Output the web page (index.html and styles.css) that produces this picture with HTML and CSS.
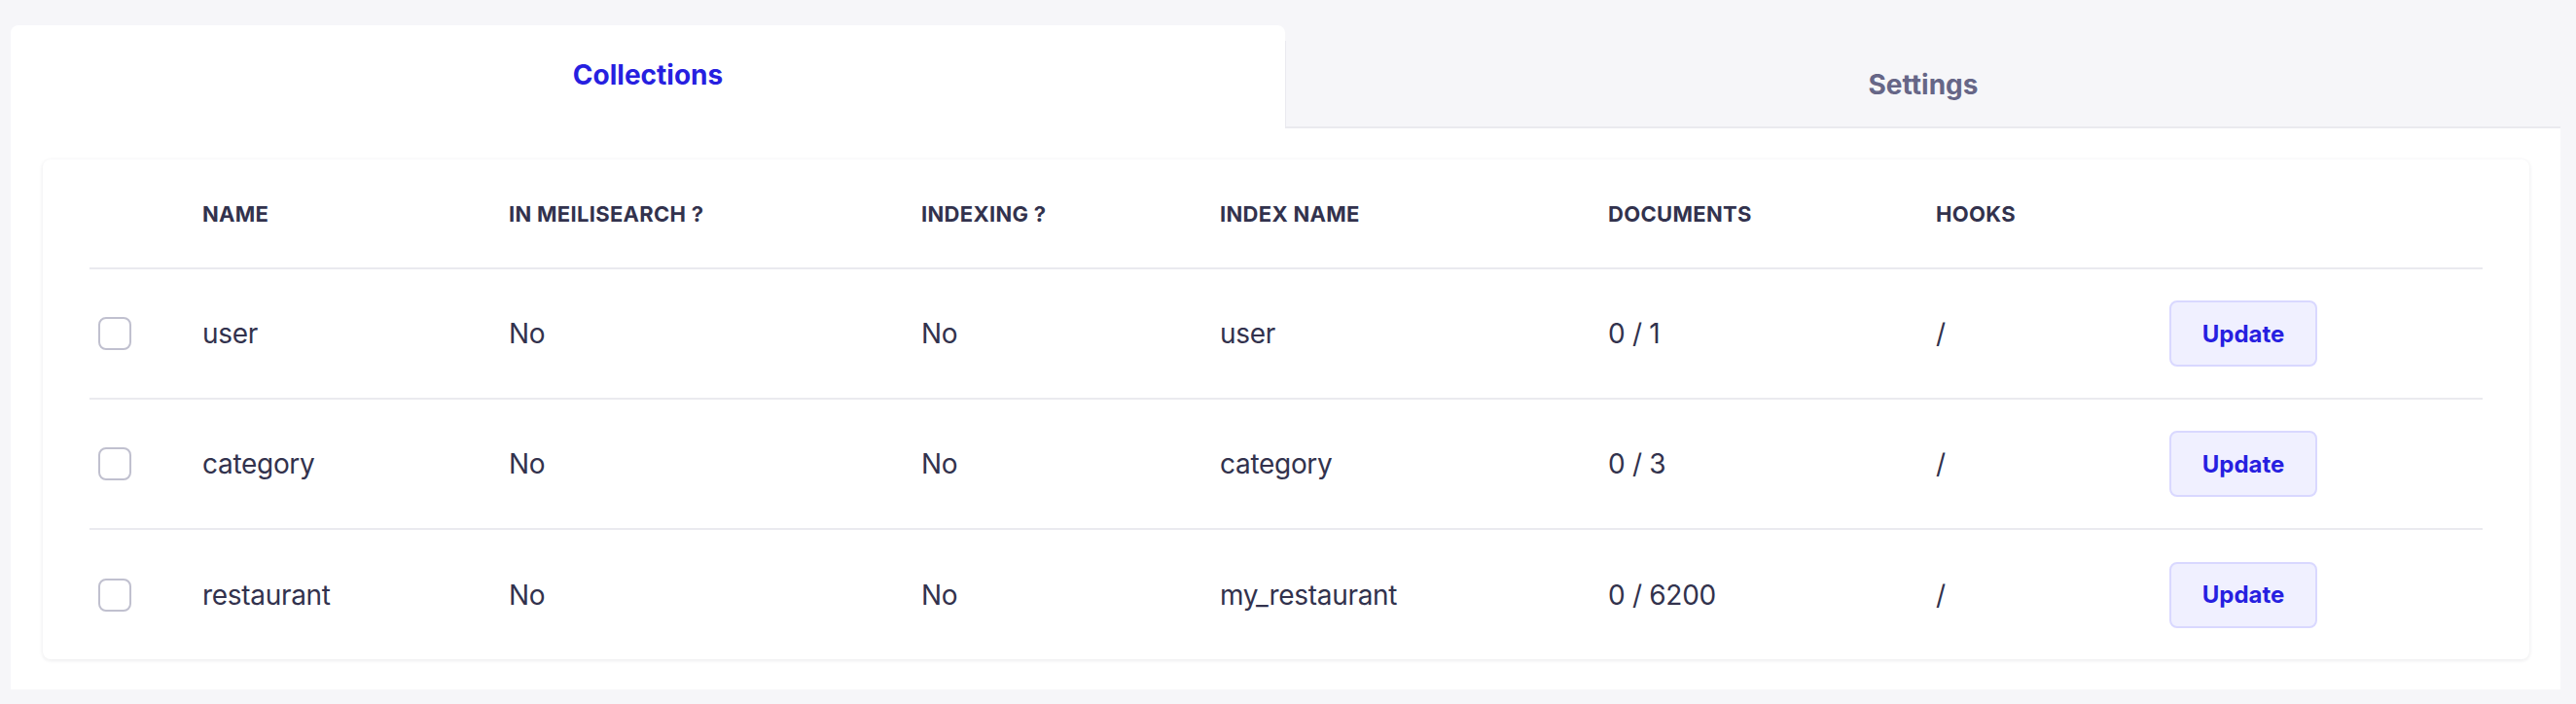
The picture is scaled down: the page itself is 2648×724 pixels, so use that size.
FILE: index.html
```html
<!DOCTYPE html>
<html lang="en">
<head>
<meta charset="utf-8">
<title>Meilisearch</title>
<link rel="stylesheet" href="styles.css">
</head>
<body>
<div class="page">
  <div class="tabs">
    <div class="tab tab-active">Collections</div>
    <div class="tab tab-inactive">Settings</div>
  </div>
  <div class="panel">
    <div class="card">
      <div class="row head">
        <div class="cell cb-cell"></div>
        <div class="cell">Name</div>
        <div class="cell">In MeiliSearch ?</div>
        <div class="cell">Indexing ?</div>
        <div class="cell">Index name</div>
        <div class="cell">Documents</div>
        <div class="cell">Hooks</div>
        <div class="cell"></div>
      </div>
      <div class="row">
        <div class="cell cb-cell"><span class="checkbox"></span></div>
        <div class="cell">user</div>
        <div class="cell">No</div>
        <div class="cell">No</div>
        <div class="cell">user</div>
        <div class="cell">0 / 1</div>
        <div class="cell">/</div>
        <div class="cell"><button class="btn">Update</button></div>
      </div>
      <div class="row">
        <div class="cell cb-cell"><span class="checkbox"></span></div>
        <div class="cell">category</div>
        <div class="cell">No</div>
        <div class="cell">No</div>
        <div class="cell">category</div>
        <div class="cell">0 / 3</div>
        <div class="cell">/</div>
        <div class="cell"><button class="btn">Update</button></div>
      </div>
      <div class="row last">
        <div class="cell cb-cell"><span class="checkbox"></span></div>
        <div class="cell">restaurant</div>
        <div class="cell">No</div>
        <div class="cell">No</div>
        <div class="cell">my_restaurant</div>
        <div class="cell">0 / 6200</div>
        <div class="cell">/</div>
        <div class="cell"><button class="btn">Update</button></div>
      </div>
    </div>
  </div>
</div>
</body>
</html>
```
FILE: styles.css
```css
html, body {
  margin: 0;
  padding: 0;
  background: #f6f6f9;
  font-family: Inter, "Noto Sans", "Liberation Sans", sans-serif;
  color: #32324d;
}

.page {
  padding: 26px 16px 15px 11px;
}

.tabs {
  display: flex;
  align-items: flex-start;
}

.tab {
  flex: 1;
  box-sizing: border-box;
  display: flex;
  justify-content: center;
  font-size: 28px;
  font-weight: 700;
  line-height: 34px;
}

.tab-active {
  height: 106px;
  padding-top: 34px;
  background: #ffffff;
  color: #271fe0;
  border-radius: 8px 8px 0 0;
}

.tab-inactive {
  margin-top: 16px;
  height: 90px;
  padding-top: 28px;
  background: #f6f6f9;
  color: #666687;
  border-bottom: 2px solid #eaeaef;
  border-left: 1px solid #eaeaef;
}

.panel {
  background: #ffffff;
  padding: 32px 32px 31px 33px;
}

.card {
  background: #ffffff;
  border-radius: 8px;
  box-shadow: 0 1px 4px rgba(33, 33, 52, 0.1);
  padding: 0 48px;
}

.row {
  display: grid;
  grid-template-columns: 116px 315px 424px 307px 399px 337px 240px 1fr;
  align-items: center;
  height: 132px;
  border-bottom: 2px solid #eaeaef;
  font-size: 28px;
  line-height: 34px;
  letter-spacing: -0.3px;
}

.row.head {
  height: 111px;
  font-size: 22px;
  font-weight: 700;
  text-transform: uppercase;
  line-height: 28px;
  letter-spacing: 0.3px;
}

.row.last {
  height: 133px;
  border-bottom: none;
}

.cell {
  white-space: nowrap;
}

.cb-cell {
  padding-left: 9px;
  display: flex;
  align-items: center;
}

.checkbox {
  display: block;
  width: 34px;
  height: 34px;
  box-sizing: border-box;
  border: 2px solid #c0c0cf;
  border-radius: 8px;
  background: #ffffff;
}

.btn {
  display: flex;
  align-items: center;
  justify-content: center;
  width: 152px;
  height: 68px;
  box-sizing: border-box;
  background: #f0f0ff;
  border: 2px solid #d9d8ff;
  border-radius: 8px;
  color: #271fe0;
  font-family: Inter, "Noto Sans", "Liberation Sans", sans-serif;
  font-size: 24px;
  font-weight: 700;
  letter-spacing: 0;
  padding: 0;
}
```
